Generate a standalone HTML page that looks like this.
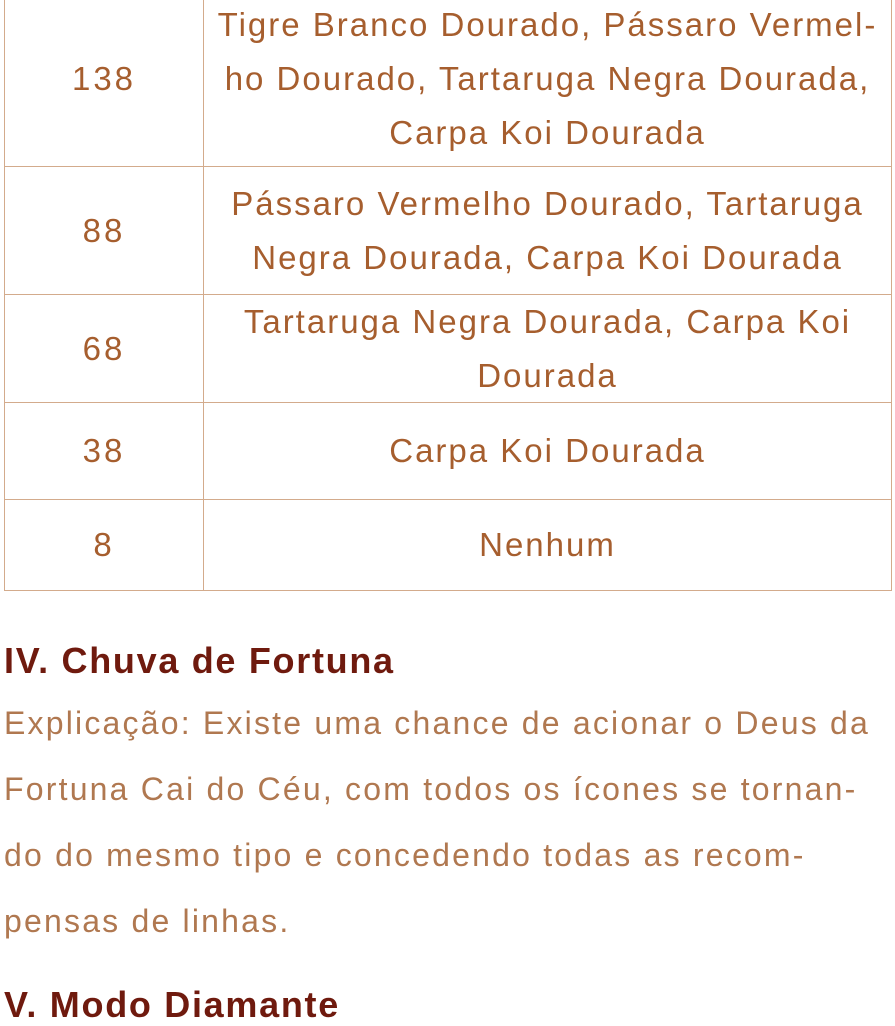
<!DOCTYPE html><html><head><meta charset="utf-8"><style>
body{margin:0;width:895px;height:1000px;overflow:hidden;background:#fff;font-family:"Liberation Sans",sans-serif;position:relative}
.r{position:absolute;left:4px;width:888px;border:1px solid #d3ab8c;border-top:none;box-sizing:border-box;display:flex;color:#a65e2e;font-size:33px;letter-spacing:2px}
.r div{display:flex;align-items:center;justify-content:center;text-align:center;line-height:54px;white-space:nowrap}
.a{width:199px;border-right:1px solid #d3ab8c;box-sizing:border-box;letter-spacing:3px}
.b{flex:1;padding:0}
h2{position:absolute;left:4px;margin:0;color:#6f1a0e;font-size:36px;font-weight:bold;letter-spacing:1.7px}
p{position:absolute;left:4px;top:690px;margin:0;width:895px;color:#b07850;font-size:32px;line-height:66px;letter-spacing:2.2px;white-space:nowrap}
</style></head><body>
<div class="r" style="top:-10px;height:177px;border-top:1px solid #d3ab8c"><div class="a">138</div><div class="b">Tigre Branco Dourado, Pássaro Vermel-<br>ho Dourado, Tartaruga Negra Dourada,<br>Carpa Koi Dourada</div></div>
<div class="r" style="top:167px;height:128px"><div class="a">88</div><div class="b">Pássaro Vermelho Dourado, Tartaruga<br>Negra Dourada, Carpa Koi Dourada</div></div>
<div class="r" style="top:295px;height:108px"><div class="a">68</div><div class="b">Tartaruga Negra Dourada, Carpa Koi<br>Dourada</div></div>
<div class="r" style="top:403px;height:97px"><div class="a">38</div><div class="b">Carpa Koi Dourada</div></div>
<div class="r" style="top:500px;height:91px"><div class="a">8</div><div class="b">Nenhum</div></div>
<h2 style="top:640px">IV. Chuva de Fortuna</h2>
<p>Explicação: Existe uma chance de acionar o Deus da<br>Fortuna Cai do Céu, com todos os ícones se tornan-<br>do do mesmo tipo e concedendo todas as recom-<br>pensas de linhas.</p>
<h2 style="top:984px">V. Modo Diamante</h2>
</body></html>
